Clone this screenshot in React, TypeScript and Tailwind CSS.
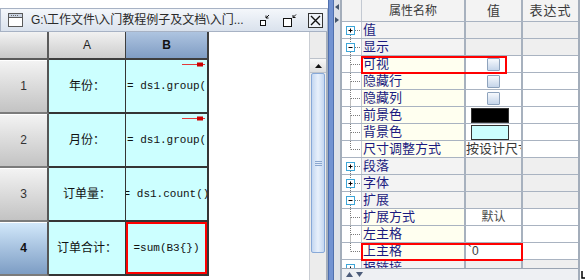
import type { ReactNode } from 'react'

const cjk = "font-['Liberation_Sans','Noto_Sans_CJK_SC',sans-serif]"
const latin = "font-['Liberation_Sans',sans-serif]"
const mono = "font-['Liberation_Mono',monospace]"

type SheetRow = { n: string; a: string; b: string; left?: boolean; arrow?: boolean; selected?: boolean }

const sheetRows: SheetRow[] = [
  { n: '1', a: '年份：', b: '= ds1.group(', left: true, arrow: true },
  { n: '2', a: '月份：', b: '= ds1.group(', left: true, arrow: true },
  { n: '3', a: '订单量：', b: '= ds1.count()' },
  { n: '4', a: '订单合计：', b: '=sum(B3{})', selected: true },
]

type Prop = {
  name: string
  group?: '+' | '-'
  up?: boolean
  down?: boolean
  value?: ReactNode
  red?: number
}

function Check() {
  return <div className="mx-auto w-[13px] h-[13px] rounded-[1px] border border-[#8ea3bd] bg-linear-to-b from-[#f6f9fd] to-[#c5d5ea]" />
}

const props: Prop[] = [
  { name: '值', group: '+', down: true },
  { name: '显示', group: '-', up: true, down: true },
  { name: '可视', up: true, down: true, value: <Check />, red: 146 },
  { name: '隐藏行', up: true, down: true, value: <Check /> },
  { name: '隐藏列', up: true, down: true, value: <Check /> },
  { name: '前景色', up: true, down: true, value: <div className="ml-[5px] w-[38px] h-[15px] border border-[#333] bg-black" /> },
  { name: '背景色', up: true, down: true, value: <div className="ml-[5px] w-[38px] h-[15px] border border-[#333] bg-[#ccffff]" /> },
  { name: '尺寸调整方式', up: true, value: <span className="whitespace-nowrap text-[13px] leading-[16px] text-[#3a3a3a]">按设计尺寸</span> },
  { name: '段落', group: '+', down: true },
  { name: '字体', group: '+', up: true, down: true },
  { name: '扩展', group: '-', up: true, down: true },
  { name: '扩展方式', up: true, down: true, value: <span className="mx-auto text-[12px] leading-[16px] text-[#4a4a4a]">默认</span> },
  { name: '左主格', up: true, down: true },
  { name: '上主格', up: true, value: <span className="ml-[2px] text-[12px] leading-[16px] text-[#3a3a3a]">`0</span>, red: 162 },
  { name: '报链接', group: '+' },
]

function TitleBar() {
  return (
    <div className="mt-[8px] h-[24px] flex items-center border border-[#a7b2c4] bg-linear-to-b from-[#f4f7fb] to-[#dae2ed] pl-[7px] pr-[4px]">
      <svg width="15" height="14" viewBox="0 0 15 14">
        <rect x="0.5" y="0.5" width="14" height="13" fill="#fff" stroke="#5a5a5a" />
        <rect x="1" y="1" width="13" height="3" fill="#c9d3e2" />
        <line x1="0.5" y1="4.5" x2="14.5" y2="4.5" stroke="#5a5a5a" />
        <path d="M3 2.5h1M5 2.5h1M7 2.5h1M9 2.5h1" stroke="#6a6a6a" />
      </svg>
      <span className="ml-[8px] text-[12px] leading-none text-[#2a2a2a] whitespace-nowrap">G:\工作文件\入门教程例子及文档\入门...</span>
      <div className="ml-auto flex items-center">
        <svg width="10" height="12" viewBox="0 0 10 12">
          <rect x="0.5" y="6.5" width="5" height="5" fill="#fff" stroke="#111" />
          <path d="M9 1L6 4M6 1.5V4H8.5" stroke="#111" fill="none" />
        </svg>
        <svg className="ml-[13px]" width="14" height="13" viewBox="0 0 14 13">
          <rect x="0.5" y="4.5" width="8" height="8" fill="#fff" stroke="#111" />
          <path d="M13 0.5L10 3.5M10 1V3.5H12.5" stroke="#111" fill="none" />
        </svg>
        <svg className="ml-[11px]" width="15" height="15" viewBox="0 0 15 15">
          <rect x="0.5" y="0.5" width="14" height="14" fill="#eef2f8" stroke="#333" />
          <path d="M3 3L12 12M12 3L3 12" stroke="#111" strokeWidth="1.4" />
        </svg>
      </div>
    </div>
  )
}

function RedArrow() {
  return (
    <svg className="absolute top-[2px] right-[2px]" width="23" height="5" viewBox="0 0 23 5">
      <line x1="0" y1="2.5" x2="23" y2="2.5" stroke="#e23a3a" />
      <rect x="15" y="0.5" width="6" height="4" fill="#cc0000" />
    </svg>
  )
}

function Sheet() {
  return (
    <div className="w-[209px] flex flex-col">
      <div className="flex h-[28px]">
        <div className="w-[49px] border-r-2 border-b-2 border-[#5a5a5a] bg-linear-to-b from-[#f3f3f3] to-[#c8c8c8]" />
        <div className={`w-[77px] border-r border-b-2 border-[#3e3e3e] bg-linear-to-b from-[#f1f1f1] to-[#cdcdcd] flex items-center justify-center text-[12px] text-[#222] ${latin}`}>A</div>
        <div className={`w-[83px] border-r-2 border-b-2 border-[#3e3e3e] bg-linear-to-b from-[#aec4e0] to-[#809dc4] flex items-center justify-center text-[12px] font-bold text-[#111] ${latin}`}>B</div>
      </div>
      {sheetRows.map(r => (
        <div key={r.n} className="flex h-[54px]">
          <div
            className={`w-[49px] border-r-2 border-b-2 border-r-[#555] border-b-[#7b7b7b] shadow-[inset_0_1px_0_#fff] flex items-center justify-center text-[12px] ${latin} ${
              r.selected ? 'bg-linear-to-b from-[#d3e9fb] to-[#7d9dc4] font-bold text-[#111]' : 'bg-linear-to-b from-[#f4f4f4] to-[#c3c3c3] text-[#333]'
            }`}
          >
            {r.n}
          </div>
          <div className="w-[77px] border-r border-b-2 border-[#353535] bg-[#ccffff] flex items-center justify-center text-[12px] text-[#111]">
            {r.a}
          </div>
          <div className="relative w-[83px] border-r-2 border-b-2 border-[#353535] bg-[#ccffff]">
            <div
              className={`h-full flex items-center overflow-hidden whitespace-nowrap text-[11px] text-[#111] ${mono} ${
                r.left ? 'justify-start pl-[1px]' : 'justify-center'
              } ${r.selected ? 'border-2 border-[#ff0000]' : ''}`}
            >
              {r.b}
            </div>
            {r.arrow && <RedArrow />}
          </div>
        </div>
      ))}
    </div>
  )
}

function VScroll() {
  return (
    <div className="w-[17px] flex flex-col bg-[#ececec] border-l border-[#c9cdd3]">
      <div className="h-[26px]" />
      <div className="h-[15px] flex items-center justify-center bg-linear-to-b from-[#f8f8f8] to-[#dedede] border-y border-[#bcc2cb]">
        <svg width="7" height="4" viewBox="0 0 7 4">
          <path d="M0 4L3.5 0L7 4Z" fill="#111" />
        </svg>
      </div>
      <div className="h-[180px] mx-[1px] rounded-[2px] border border-[#88a9d8] bg-linear-to-r from-[#c4d7f1] via-[#e8f0fb] to-[#c4d7f1] flex flex-col items-center justify-center gap-[1px]">
        <div className="w-[7px] h-px bg-[#8aa6cf]" />
        <div className="w-[7px] h-px bg-[#8aa6cf]" />
        <div className="w-[7px] h-px bg-[#8aa6cf]" />
      </div>
      <div className="flex-1" />
    </div>
  )
}

function Splitter() {
  return (
    <div className="w-[12px] flex">
      <div className="w-[6px] border-x border-[#4f6fae] bg-[#7192d2]" />
      <div className="flex-1 bg-[#dde1e8] pt-[4px] flex flex-col items-center gap-[7px]">
        <svg width="4" height="6" viewBox="0 0 4 6">
          <path d="M4 0L0 3L4 6Z" fill="#44546a" />
        </svg>
        <svg width="4" height="6" viewBox="0 0 4 6">
          <path d="M0 0L4 3L0 6Z" fill="#44546a" />
        </svg>
      </div>
    </div>
  )
}

function Tree({ p }: { p: Prop }) {
  const dash = { stroke: '#7a7a7a', strokeDasharray: '1 1' }
  return (
    <svg width="19" height="16" viewBox="0 0 19 16">
      {p.up && <line x1="8.5" y1="0" x2="8.5" y2={p.group ? 4 : 8.5} {...dash} />}
      {p.down && <line x1="8.5" y1={p.group ? 13 : 8.5} x2="8.5" y2="16" {...dash} />}
      <line x1={p.group ? 13 : 9} y1="8.5" x2="19" y2="8.5" {...dash} />
      {p.group && (
        <>
          <rect x="4.5" y="4.5" width="8" height="8" fill="#fff" stroke="#3ea6d8" />
          <line x1="6.5" y1="8.5" x2="10.5" y2="8.5" stroke="#000" />
          {p.group === '+' && <line x1="8.5" y1="6.5" x2="8.5" y2="10.5" stroke="#000" />}
        </>
      )}
    </svg>
  )
}

function PropPanel() {
  return (
    <div className="w-[240px] flex flex-col border-x-2 border-[#a3adba]">
      <div className="h-[268px] overflow-hidden">
        <div className="flex h-[22px] border-b border-[#a9b3c1] bg-[#f3f3f3] text-[12px] text-[#3a3a3a]">
          <div className="w-[19px]" />
          <div className="w-[105px] border-l border-[#c3c9d2] border-r-2 border-r-[#a7b1be] flex items-center justify-center">属性名称</div>
          <div className="w-[57px] border-r-2 border-[#a7b1be] flex items-center justify-center text-[13px]">值</div>
          <div className="flex-1 flex items-center justify-center text-[13px] tracking-[1px]">表达式</div>
        </div>
        {props.map(p => (
          <div key={p.name} className="relative flex h-[17px] border-b border-[#a9b3c1]">
            <div className="w-[19px] bg-white">
              <Tree p={p} />
            </div>
            <div
              className={`w-[105px] border-l border-[#c3c9d2] border-r-2 border-r-[#a7b1be] pl-[1px] text-[13px] leading-[16px] text-[#1b1b80] whitespace-nowrap ${
                p.group ? 'bg-[#f3f3f3]' : 'bg-[#fffff0]'
              }`}
            >
              {p.name}
            </div>
            <div className={`w-[57px] border-r-2 border-[#a7b1be] flex items-center overflow-hidden ${p.group ? 'bg-[#efefef]' : 'bg-white'}`}>
              {p.value}
            </div>
            <div className={`flex-1 ${p.group ? 'bg-[#efefef]' : 'bg-white'}`} />
            {p.red === 146 && <div className="absolute left-[19px] top-0 w-[146px] h-[18px] border-2 border-[#ff0000] z-10" />}
            {p.red === 162 && <div className="absolute left-[19px] top-0 w-[162px] h-[18px] border-2 border-[#ff0000] z-10" />}
          </div>
        ))}
      </div>
      <div className="h-[12px] border-t border-[#9aa4b2] bg-[#eef0f3] flex items-center pl-[4px] gap-[3px]">
        <svg width="7" height="5" viewBox="0 0 7 5">
          <path d="M0 5L3.5 0L7 5Z" fill="#4d5d7a" />
        </svg>
        <svg width="7" height="5" viewBox="0 0 7 5">
          <path d="M0 0L3.5 5L7 0Z" fill="#4d5d7a" />
        </svg>
      </div>
    </div>
  )
}

export default function App() {
  return (
    <div className={`w-[588px] h-[280px] bg-white flex overflow-hidden ${cjk}`}>
      <div className="w-[328px] flex flex-col">
        <TitleBar />
        <div className="flex flex-1 min-h-0 border-r-2 border-[#a4aebc]">
          <Sheet />
          <div className="flex-1 bg-white" />
          <VScroll />
        </div>
      </div>
      <Splitter />
      <PropPanel />
      <div className="flex-1 flex flex-col justify-end pl-[1px] pb-[1px]">
        <svg width="5" height="8" viewBox="0 0 5 8">
          <path d="M1 0V7H4" stroke="#000" strokeWidth="1.5" fill="none" />
        </svg>
      </div>
    </div>
  )
}
